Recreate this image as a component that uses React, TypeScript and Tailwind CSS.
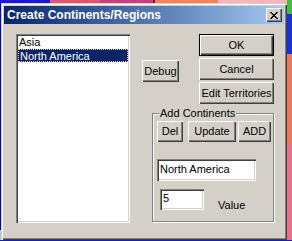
const font = "font-['Liberation_Sans',Arial,sans-serif]";

const raised =
  "bg-[#d4d0c8] shadow-[inset_1px_1px_0_#fff,inset_-1px_-1px_0_#404040,inset_-2px_-2px_0_#808080]";
const sunken =
  "bg-white shadow-[inset_1px_1px_0_#808080,inset_2px_2px_0_#404040,inset_-1px_-1px_0_#fff,inset_-2px_-2px_0_#d4d0c8]";

function Btn({ label, className = "" }: { label: string; className?: string }) {
  return (
    <div
      className={`${raised} flex items-center justify-center text-[11px] leading-[13px] text-black ${className}`}
    >
      {label}
    </div>
  );
}

function CloseBox() {
  return (
    <div className={`${raised} w-[16px] h-[14px] flex items-center justify-center`}>
      <svg width="8" height="7" viewBox="0 0 8 7" shapeRendering="crispEdges">
        <path
          d="M0 0h2v1h1v1h2v-1h1v-1h2v1h-1v1h-1v1h-1v1h1v1h1v1h1v1h-2v-1h-1v-1h-2v1h-1v1h-2v-1h1v-1h1v-1h1v-1h-1v-1h-1v-1h-1z"
          fill="#000"
        />
      </svg>
    </div>
  );
}

export default function App() {
  return (
    <div className={`relative w-[292px] h-[241px] overflow-hidden bg-[#e8708c] ${font}`}>
      {/* desktop wallpaper bits */}
      <div className="absolute left-0 top-0 w-[50px] h-[4px] bg-[#1818e0]" />
      <div className="absolute left-[50px] top-0 w-[50px] h-[4px] bg-[#e85070]" />
      <div className="absolute left-[100px] top-0 w-[53px] h-[4px] bg-[#d03a80]" />
      <div className="absolute left-[153px] top-0 w-[2px] h-[4px] bg-[#602040]" />
      <div className="absolute left-[155px] top-0 w-[63px] h-[4px] bg-[#f8805a]" />
      <div className="absolute left-[218px] top-0 w-[69px] h-[4px] bg-[#f8b4c4]" />
      <div className="absolute left-[287px] top-0 w-[5px] h-[14px] bg-[#40c040]" />
      <div className="absolute left-[286px] top-[14px] w-[6px] h-[40px] bg-[#1830e0]" />
      <div className="absolute left-[287px] top-[54px] w-[5px] h-[90px] bg-[#e87858]" />
      <div className="absolute left-0 top-0 w-[1px] h-[230px] bg-[#0000f0]" />
      <div className="absolute left-0 top-[230px] w-[1px] h-[11px] bg-[#a0d0c8]" />
      <div className="absolute left-0 top-[240px] w-[292px] h-[1px] bg-[#1020c0]" />

      {/* dialog window */}
      <div className="absolute left-[1px] top-[3px] w-[286px] h-[237px] bg-[#d4d0c8] shadow-[inset_1px_1px_0_#d4d0c8,inset_2px_2px_0_#fff,inset_-1px_-1px_0_#404040,inset_-2px_-2px_0_#808080] p-[3px] flex flex-col">
        <div className="h-[18px] flex items-center justify-between pl-[3px] pr-[2px] bg-gradient-to-r from-[#0a246a] to-[#a6caf0]">
          <span className="text-white font-bold text-[12px] leading-[14px]">
            Create Continents/Regions
          </span>
          <CloseBox />
        </div>

        <div className="flex items-start pl-[12px] pt-[10px]">
          {/* list box */}
          <div className={`${sunken} w-[114px] h-[189px] p-[2px] flex flex-col`}>
            <div className="h-[13px] pl-[1px] text-[11px] leading-[13px] text-black">Asia</div>
            <div className="h-[13px] pl-[1px] text-[11px] leading-[12px] text-white bg-[#0a246a] border border-dotted border-[#e8c870]">
              North America
            </div>
          </div>

          <div className="ml-[12px] flex flex-col">
            <div className="flex items-start">
              <Btn label="Debug" className="mt-[26px] w-[37px] h-[22px]" />
              <div className="ml-[20px] flex flex-col gap-[2px] w-[75px]">
                <Btn
                  label="OK"
                  className="h-[22px] border border-black shadow-[inset_1px_1px_0_#fff,inset_-1px_-1px_0_#404040,inset_-2px_-2px_0_#808080]"
                />
                <Btn label="Cancel" className="h-[22px]" />
                <Btn label="Edit Territories" className="h-[22px]" />
              </div>
            </div>

            {/* group box */}
            <div className="relative ml-[10px] mt-[9px] w-[122px] h-[109px] border border-[#808080] shadow-[inset_1px_1px_0_#fff,1px_1px_0_#fff] pl-[4px] pt-[7px]">
              <span className="absolute left-[6px] -top-[7px] px-[1px] bg-[#d4d0c8] text-[11px] leading-[13px] text-black">
                Add Continents
              </span>
              <div className="flex">
                <Btn label="Del" className="w-[26px] h-[21px]" />
                <Btn label="Update" className="ml-[5px] w-[48px] h-[21px]" />
                <Btn label="ADD" className="ml-[2px] w-[33px] h-[21px]" />
              </div>
              <div className={`${sunken} mt-[17px] w-[99px] h-[22px] pl-[3px] pt-[4px] text-[11px] leading-[13px] text-black`}>
                North America
              </div>
              <div className="flex items-start mt-[8px]">
                <div className={`${sunken} ml-[3px] w-[44px] h-[21px] pl-[3px] pt-[3px] text-[11px] leading-[13px] text-black`}>
                  5
                </div>
                <span className="ml-[14px] mt-[10px] text-[11px] leading-[13px] text-black">Value</span>
              </div>
            </div>
          </div>
        </div>
      </div>
    </div>
  );
}
